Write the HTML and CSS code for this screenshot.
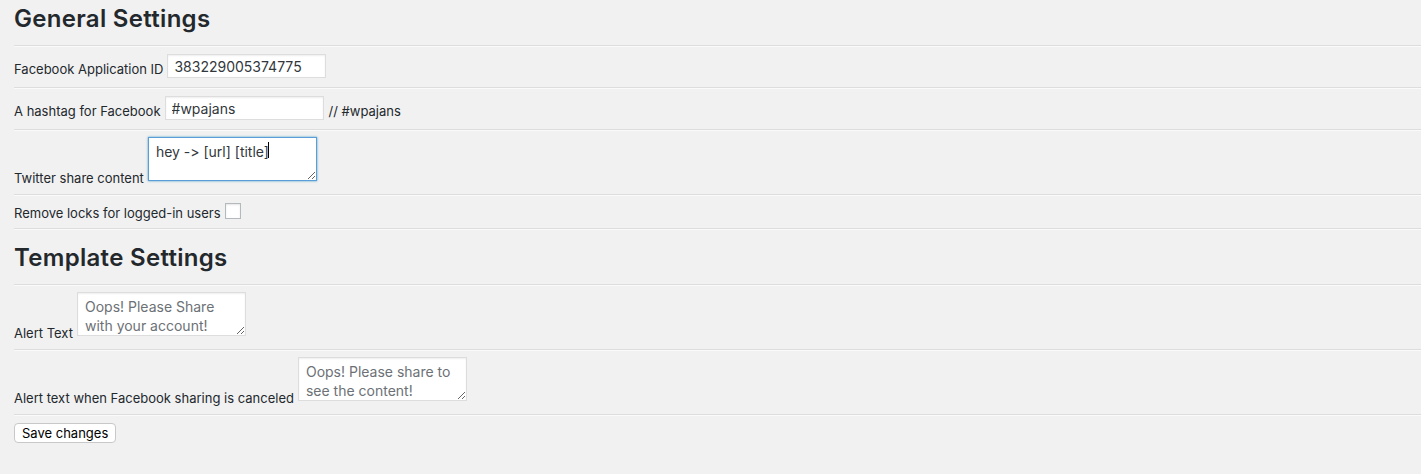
FILE: index.html
```html
<!DOCTYPE html>
<html lang="en">
<head>
    <meta charset="UTF-8">
    <meta name="viewport" content="width=device-width, initial-scale=1.0">
    <title>Share Lock Settings</title>
    <link rel="stylesheet" href="styles.css">
</head>
<body>
    <form class="settings" id="settingsForm">
        <h2 class="section-title first">General Settings</h2>
        <hr>
        <div class="row">
            <label for="fbAppId">Facebook Application ID</label>
            <input type="text" id="fbAppId" name="fb_app_id" value="383229005374775">
        </div>
        <hr>
        <div class="row">
            <label for="fbHashtag">A hashtag for Facebook</label>
            <input type="text" id="fbHashtag" name="fb_hashtag" value="#wpajans">
            <span class="hint">// #wpajans</span>
        </div>
        <hr>
        <div class="row row-area">
            <label for="twContent">Twitter share content</label>
            <span class="field">
                <textarea id="twContent" name="tw_content" class="is-focused">hey -> [url] [title]</textarea>
                <span class="caret"></span>
            </span>
        </div>
        <hr>
        <div class="row row-check">
            <label for="removeLocks">Remove locks for logged-in users</label>
            <input type="checkbox" id="removeLocks" name="remove_locks">
        </div>
        <hr>
        <h2 class="section-title">Template Settings</h2>
        <hr>
        <div class="row row-area">
            <label for="alertText">Alert Text</label>
            <textarea id="alertText" name="alert_text" placeholder="Oops! Please Share with your account!"></textarea>
        </div>
        <hr>
        <div class="row row-area">
            <label for="alertCancel">Alert text when Facebook sharing is canceled</label>
            <textarea id="alertCancel" name="alert_cancel" placeholder="Oops! Please share to see the content!"></textarea>
        </div>
        <hr>
        <button type="submit" class="save">Save changes</button>
    </form>
</body>
</html>
```

FILE: styles.css
```css
body {
    font-family: Inter, "Noto Sans", sans-serif;
    font-size: 13px;
    font-feature-settings: "calt" 0;
    color: #23282d;
    background-color: #f1f1f1;
    margin: 0;
    padding: 0;
}

.settings {
    padding-left: 14px;
}

.section-title {
    font-size: 24px;
    font-weight: 600;
    letter-spacing: 0.3px;
    line-height: 30px;
    margin: 13px 0 11px;
    color: #23282d;
}

.section-title.first {
    margin-top: 4px;
}

hr {
    border: 0;
    border-top: 1px solid #ddd;
    border-bottom: 1px solid #fafafa;
    margin: 0;
    height: 0;
}

.row {
    display: flex;
    align-items: flex-end;
    gap: 4px;
    padding: 7px 0 9px;
}

.row label {
    line-height: 18px;
}

.row-area {
    padding: 6px 0 13px;
}

.row-area label {
    margin-bottom: -6px;
}

.row-check {
    padding: 7px 0 9px;
}

.row-check label {
    margin-bottom: -3px;
}

input[type="text"] {
    width: 159px;
    height: 24px;
    box-sizing: border-box;
    margin: 0;
    padding: 0 6px;
    border: 1px solid #ddd;
    box-shadow: inset 0 1px 2px rgba(0, 0, 0, 0.07);
    background-color: #fff;
    color: #32373c;
    font-family: inherit;
    font-size: 14px;
    font-feature-settings: "calt" 0;
    outline: none;
}

.hint {
    line-height: 18px;
    margin-left: 1px;
}

.field {
    position: relative;
    display: flex;
}

textarea {
    width: 169px;
    height: 44px;
    box-sizing: border-box;
    margin: 0;
    padding: 4px 7px;
    border: 1px solid #ddd;
    box-shadow: inset 0 1px 2px rgba(0, 0, 0, 0.07);
    background-color: #fff;
    color: #32373c;
    font-family: inherit;
    font-size: 14px;
    font-feature-settings: "calt" 0;
    line-height: 19px;
    outline: none;
}

textarea::placeholder {
    color: #6c7176;
    opacity: 1;
}

textarea.is-focused {
    border-color: #5b9dd9;
    box-shadow: 0 0 2px rgba(30, 140, 190, 0.8);
}

.caret {
    position: absolute;
    left: 120px;
    top: 5px;
    width: 1px;
    height: 16px;
    background-color: #000;
}

input[type="checkbox"] {
    appearance: none;
    width: 16px;
    height: 16px;
    margin: 0;
    border: 1px solid #b4b9be;
    background-color: #fff;
    box-shadow: inset 0 1px 2px rgba(0, 0, 0, 0.1);
}

.save {
    margin-top: 7px;
    height: 20px;
    padding: 0 7px;
    font-family: inherit;
    font-size: 13px;
    color: #000;
    background-color: #fff;
    border: 1px solid #c8c8c8;
    border-radius: 4px;
    cursor: pointer;
}
```
